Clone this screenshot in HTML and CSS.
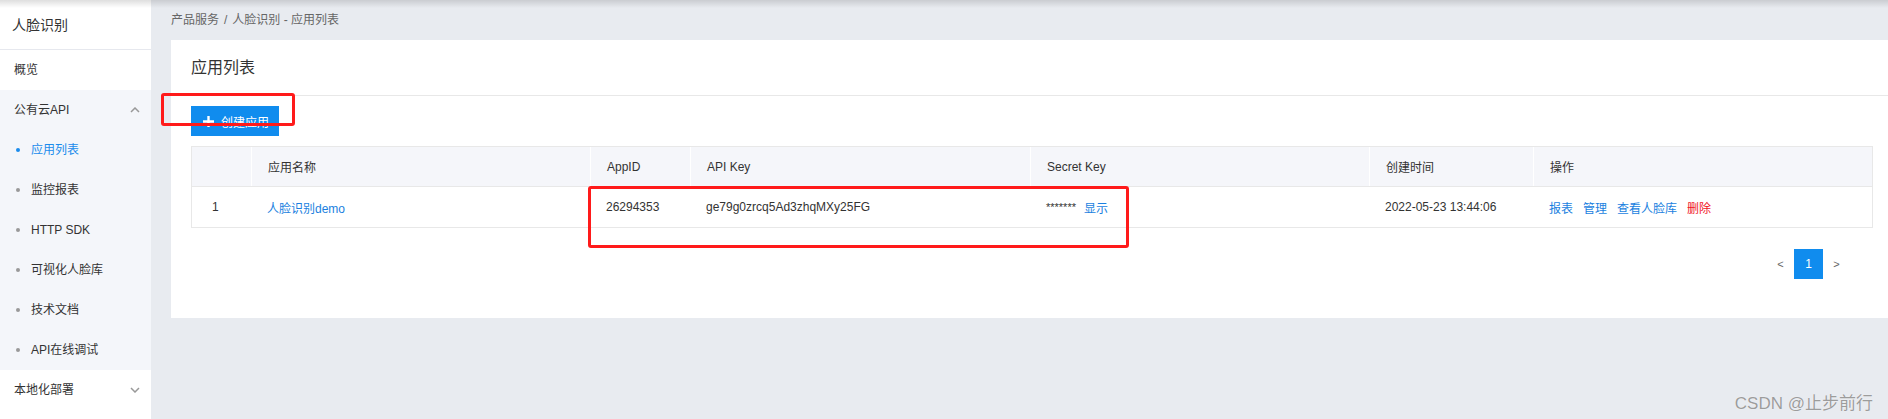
FILE: index.html
```html
<!DOCTYPE html>
<html lang="zh-CN">
<head>
    <meta charset="UTF-8">
    <meta name="viewport" content="width=device-width, initial-scale=1.0">
    <title>人脸识别 - 应用列表</title>
    <link rel="stylesheet" href="styles.css">
</head>
<body>
    <div class="page">
        <!-- Menú lateral -->
        <aside class="sidebar">
            <div class="side-title">人脸识别</div>
            <div class="nav-item">概览</div>
            <div class="nav-group">
                <div class="nav-item nav-head">
                    <span>公有云API</span>
                    <svg class="chev" viewBox="0 0 10 6"><path d="M1 5 L5 1 L9 5"/></svg>
                </div>
                <div class="sub active">应用列表</div>
                <div class="sub">监控报表</div>
                <div class="sub">HTTP SDK</div>
                <div class="sub">可视化人脸库</div>
                <div class="sub">技术文档</div>
                <div class="sub">API在线调试</div>
            </div>
            <div class="nav-item nav-head">
                <span>本地化部署</span>
                <svg class="chev" viewBox="0 0 10 6"><path d="M1 1 L5 5 L9 1"/></svg>
            </div>
        </aside>

        <!-- Contenido -->
        <main class="main">
            <div class="crumb">产品服务<span class="sep">/</span>人脸识别 - 应用列表</div>
            <section class="card">
                <div class="card-head">应用列表</div>
                <div class="card-body">
                    <button class="btn">
                        <svg class="plus" viewBox="0 0 12 12"><path d="M6 0 V12 M0 6 H12"/></svg>
                        创建应用
                    </button>

                    <div class="table">
                        <div class="tr th">
                            <div class="td"></div>
                            <div class="td">应用名称</div>
                            <div class="td">AppID</div>
                            <div class="td">API Key</div>
                            <div class="td">Secret Key</div>
                            <div class="td">创建时间</div>
                            <div class="td">操作</div>
                        </div>
                        <div class="tr">
                            <div class="td num">1</div>
                            <div class="td"><a class="link">人脸识别demo</a></div>
                            <div class="td">26294353</div>
                            <div class="td">ge79g0zrcq5Ad3zhqMXy25FG</div>
                            <div class="td"><span class="stars">*******</span><a class="link">显示</a></div>
                            <div class="td">2022-05-23 13:44:06</div>
                            <div class="td ops">
                                <a class="link">报表</a>
                                <a class="link">管理</a>
                                <a class="link">查看人脸库</a>
                                <a class="link danger">删除</a>
                            </div>
                        </div>
                    </div>

                    <div class="pager">
                        <span class="pg">&lt;</span>
                        <span class="pg current">1</span>
                        <span class="pg">&gt;</span>
                    </div>
                </div>
            </section>
        </main>
    </div>

    <!-- Marcas rojas de la captura -->
    <div class="mark mark-btn"></div>
    <div class="mark mark-keys"></div>

    <div class="top-shadow"></div>
    <div class="watermark">CSDN @止步前行</div>
</body>
</html>
```

FILE: styles.css
```css
body {
    margin: 0;
    font-family: "Liberation Sans", Arial, "Noto Sans CJK SC", sans-serif;
    font-size: 12px;
    color: #333;
    background-color: #e8ebf0;
}
.page {
    display: flex;
    height: 419px;
    overflow: hidden;
}

/* Menú lateral */
.sidebar {
    width: 151px;
    flex-shrink: 0;
    background-color: #fff;
}
.side-title {
    height: 50px;
    line-height: 50px;
    padding-left: 12px;
    font-size: 14px;
    color: #333;
    border-bottom: 1px solid #e6e8ee;
    box-sizing: border-box;
}
.nav-item {
    height: 40px;
    line-height: 40px;
    padding-left: 14px;
}
.nav-head {
    display: flex;
    justify-content: space-between;
    align-items: center;
    padding-right: 11px;
}
.nav-group {
    background-color: #f4f6fa;
}
.chev {
    width: 10px;
    height: 6px;
    fill: none;
    stroke: #999;
    stroke-width: 1.5;
}
.sub {
    position: relative;
    height: 40px;
    line-height: 40px;
    padding-left: 31px;
    color: #333;
}
.sub::before {
    content: "";
    position: absolute;
    left: 16px;
    top: 18px;
    width: 4px;
    height: 4px;
    border-radius: 50%;
    background-color: #999;
}
.sub.active {
    color: #1a8cec;
}
.sub.active::before {
    background-color: #1a8cec;
}

/* Contenido */
.main {
    flex: 1;
    padding-left: 20px;
}
.crumb {
    height: 40px;
    line-height: 40px;
    color: #666;
}
.sep {
    margin: 0 5px;
}
.card {
    background-color: #fff;
    height: 278px;
}
.card-head {
    height: 56px;
    line-height: 55px;
    padding-left: 20px;
    font-size: 16px;
    color: #333;
    border-bottom: 1px solid #e8e8e8;
    box-sizing: border-box;
}
.card-body {
    padding: 10px 15px 0 20px;
}
.btn {
    display: flex;
    align-items: center;
    width: 88px;
    height: 30px;
    padding: 0 0 0 12px;
    border: none;
    background-color: #108cee;
    color: #fff;
    font-family: inherit;
    font-size: 12px;
    cursor: pointer;
}
.plus {
    width: 11px;
    height: 11px;
    margin-right: 7px;
    stroke: #fff;
    stroke-width: 2.6;
}

/* Tabla */
.table {
    margin-top: 10px;
    border: 1px solid #e8e8e8;
}
.tr {
    display: grid;
    grid-template-columns: 59px 339px 100px 340px 339px 164px 1fr;
    height: 40px;
    box-sizing: border-box;
}
.td {
    display: flex;
    align-items: center;
    padding-left: 16px;
    white-space: nowrap;
}
.th {
    background-color: #f5f6fa;
    border-bottom: 1px solid #e8e8e8;
}
.th .td + .td {
    border-left: 1px solid #fff;
}
.num {
    padding-left: 20px;
}
.link {
    color: #1a7fe0;
    cursor: pointer;
}
.danger {
    color: #f0141e;
}
.stars {
    margin-right: 8px;
    font-size: 11px;
}
.ops .link {
    margin-right: 10px;
}

/* Paginación */
.pager {
    display: flex;
    justify-content: flex-end;
    margin-top: 21px;
    padding-right: 23px;
}
.pg {
    width: 27px;
    height: 30px;
    line-height: 30px;
    text-align: center;
    color: #666;
    font-size: 11px;
}
.pg.current {
    width: 29px;
    background-color: #108cee;
    color: #fff;
    font-size: 12px;
}

/* Marcas rojas */
.mark {
    position: absolute;
    border: 3px solid #ff1a1a;
    border-radius: 3px;
    box-sizing: border-box;
}
.mark-btn {
    left: 161px;
    top: 93px;
    width: 134px;
    height: 33px;
}
.mark-keys {
    left: 588px;
    top: 186px;
    width: 541px;
    height: 62px;
}

.top-shadow {
    position: absolute;
    left: 0;
    top: 0;
    width: 100%;
    height: 8px;
    background: linear-gradient(rgba(0, 0, 0, 0.13), rgba(0, 0, 0, 0));
}
.watermark {
    position: absolute;
    right: 15px;
    top: 389px;
    font-size: 17px;
    color: #9c9c9c;
    text-shadow: 0 0 1px #fff;
}
```
